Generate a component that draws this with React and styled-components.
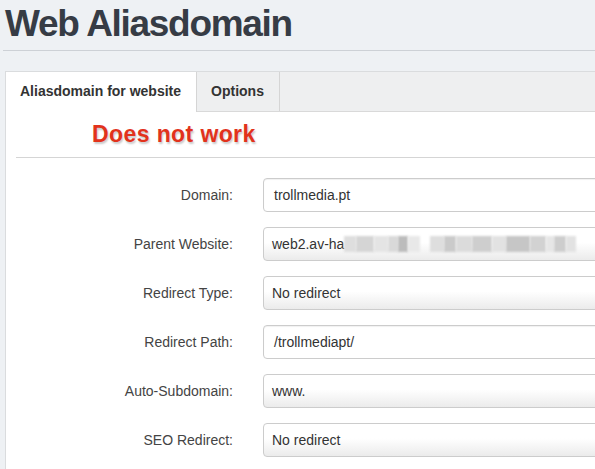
import React from "react";
import styled, { createGlobalStyle } from "styled-components";

const GlobalStyle = createGlobalStyle`
  html, body {
    margin: 0;
    padding: 0;
    background: #eef1f4;
    overflow: hidden;
  }
  body {
    font-family: "Liberation Sans", Arial, Helvetica, sans-serif;
  }
`;

const Page = styled.div`
  width: 595px;
  height: 469px;
  overflow: hidden;
`;

const Title = styled.h1`
  margin: 0 0 0 3px;
  padding: 0 0 0 2px;
  height: 50px;
  border-bottom: 1px solid #cdd1d6;
  font-size: 37px;
  font-weight: bold;
  letter-spacing: -1.3px;
  line-height: 48px;
  color: #363c45;
  white-space: nowrap;
`;

const Panel = styled.div`
  margin: 20px 0 0 5px;
  width: 720px;
  height: 420px;
  border: 1px solid #dadcde;
  background: #fff;
`;

const TabBar = styled.div`
  display: flex;
  height: 39px;
  background: #eeeff0;
  border-bottom: 1px solid #d9d9d9;
`;

const Tab = styled.div`
  padding: 0 15px 0 14px;
  height: ${(p) => (p.$active ? "40px" : "39px")};
  line-height: 39px;
  font-size: 14px;
  font-weight: bold;
  color: #333;
  background: ${(p) => (p.$active ? "#fff" : "transparent")};
  border-right: 1px solid #d5d5d5;
  white-space: nowrap;
`;

const Body = styled.div`
  padding: 0 10px;
`;

const Notice = styled.div`
  height: 45px;
  line-height: 45px;
  padding-left: 76px;
  border-bottom: 1px solid #d5d5d5;
  font-size: 23px;
  font-weight: bold;
  letter-spacing: 0.4px;
  color: #e2321c;
  text-shadow: 1px 2px 2px rgba(0, 0, 0, 0.22);
`;

const Form = styled.div`
  display: grid;
  grid-template-columns: 217px 400px;
  column-gap: 30px;
  row-gap: 15px;
  padding-top: 20px;
`;

const Label = styled.div`
  text-align: right;
  font-size: 14px;
  line-height: 34px;
  color: #444;
`;

const Field = styled.div`
  box-sizing: border-box;
  height: 34px;
  display: flex;
  align-items: center;
  padding: 0 ${(p) => (p.$select ? "8px" : "10px")};
  border: 1px solid #cccccc;
  border-radius: 4px;
  font-size: 14px;
  color: #333;
  white-space: nowrap;
  background: ${(p) =>
    p.$select ? "linear-gradient(#ffffff 45%, #ebebeb)" : "#fff"};
  box-shadow: ${(p) =>
    p.$select ? "none" : "inset 0 1px 1px rgba(0, 0, 0, 0.06)"};
`;

const Blurred = styled.span`
  display: inline-block;
  height: 16px;
  margin-left: ${(p) => p.$gap || 0}px;
  background: ${(p) => p.$shade};
  filter: blur(1px);
`;

const hidden = [
  { w: 12, shade: "#dedede" },
  { w: 18, shade: "#d5d5d5" },
  { w: 14, shade: "#e4e4e4" },
  { w: 10, shade: "#d9d9d9" },
  { w: 10, shade: "#bcbcbc" },
  { w: 12, shade: "#e8e8e8" },
  { w: 14, shade: "#dedede", gap: 10 },
  { w: 12, shade: "#cacaca" },
  { w: 16, shade: "#dbdbdb" },
  { w: 20, shade: "#cecece" },
  { w: 14, shade: "#e2e2e2" },
  { w: 24, shade: "#c6c6c6" },
  { w: 16, shade: "#d2d2d2" },
  { w: 8, shade: "#e6e6e6" },
  { w: 12, shade: "#cdcdcd" },
  { w: 10, shade: "#e2e2e2" },
];

const rows = [
  { label: "Domain:", value: "trollmedia.pt" },
  { label: "Parent Website:", value: "web2.av-ha", select: true, masked: true },
  { label: "Redirect Type:", value: "No redirect", select: true },
  { label: "Redirect Path:", value: "/trollmediapt/" },
  { label: "Auto-Subdomain:", value: "www.", select: true },
  { label: "SEO Redirect:", value: "No redirect", select: true },
];

export default function App() {
  return (
    <Page>
      <GlobalStyle />
      <Title>Web Aliasdomain</Title>
      <Panel>
        <TabBar>
          <Tab $active>Aliasdomain for website</Tab>
          <Tab>Options</Tab>
        </TabBar>
        <Body>
          <Notice>Does not work</Notice>
          <Form>
            {rows.map((r) => (
              <React.Fragment key={r.label}>
                <Label>{r.label}</Label>
                <Field $select={r.select}>
                  {r.value}
                  {r.masked &&
                    hidden.map((b, i) => (
                      <Blurred
                        key={i}
                        $shade={b.shade}
                        $gap={b.gap}
                        style={{ width: b.w }}
                      />
                    ))}
                </Field>
              </React.Fragment>
            ))}
          </Form>
        </Body>
      </Panel>
    </Page>
  );
}
